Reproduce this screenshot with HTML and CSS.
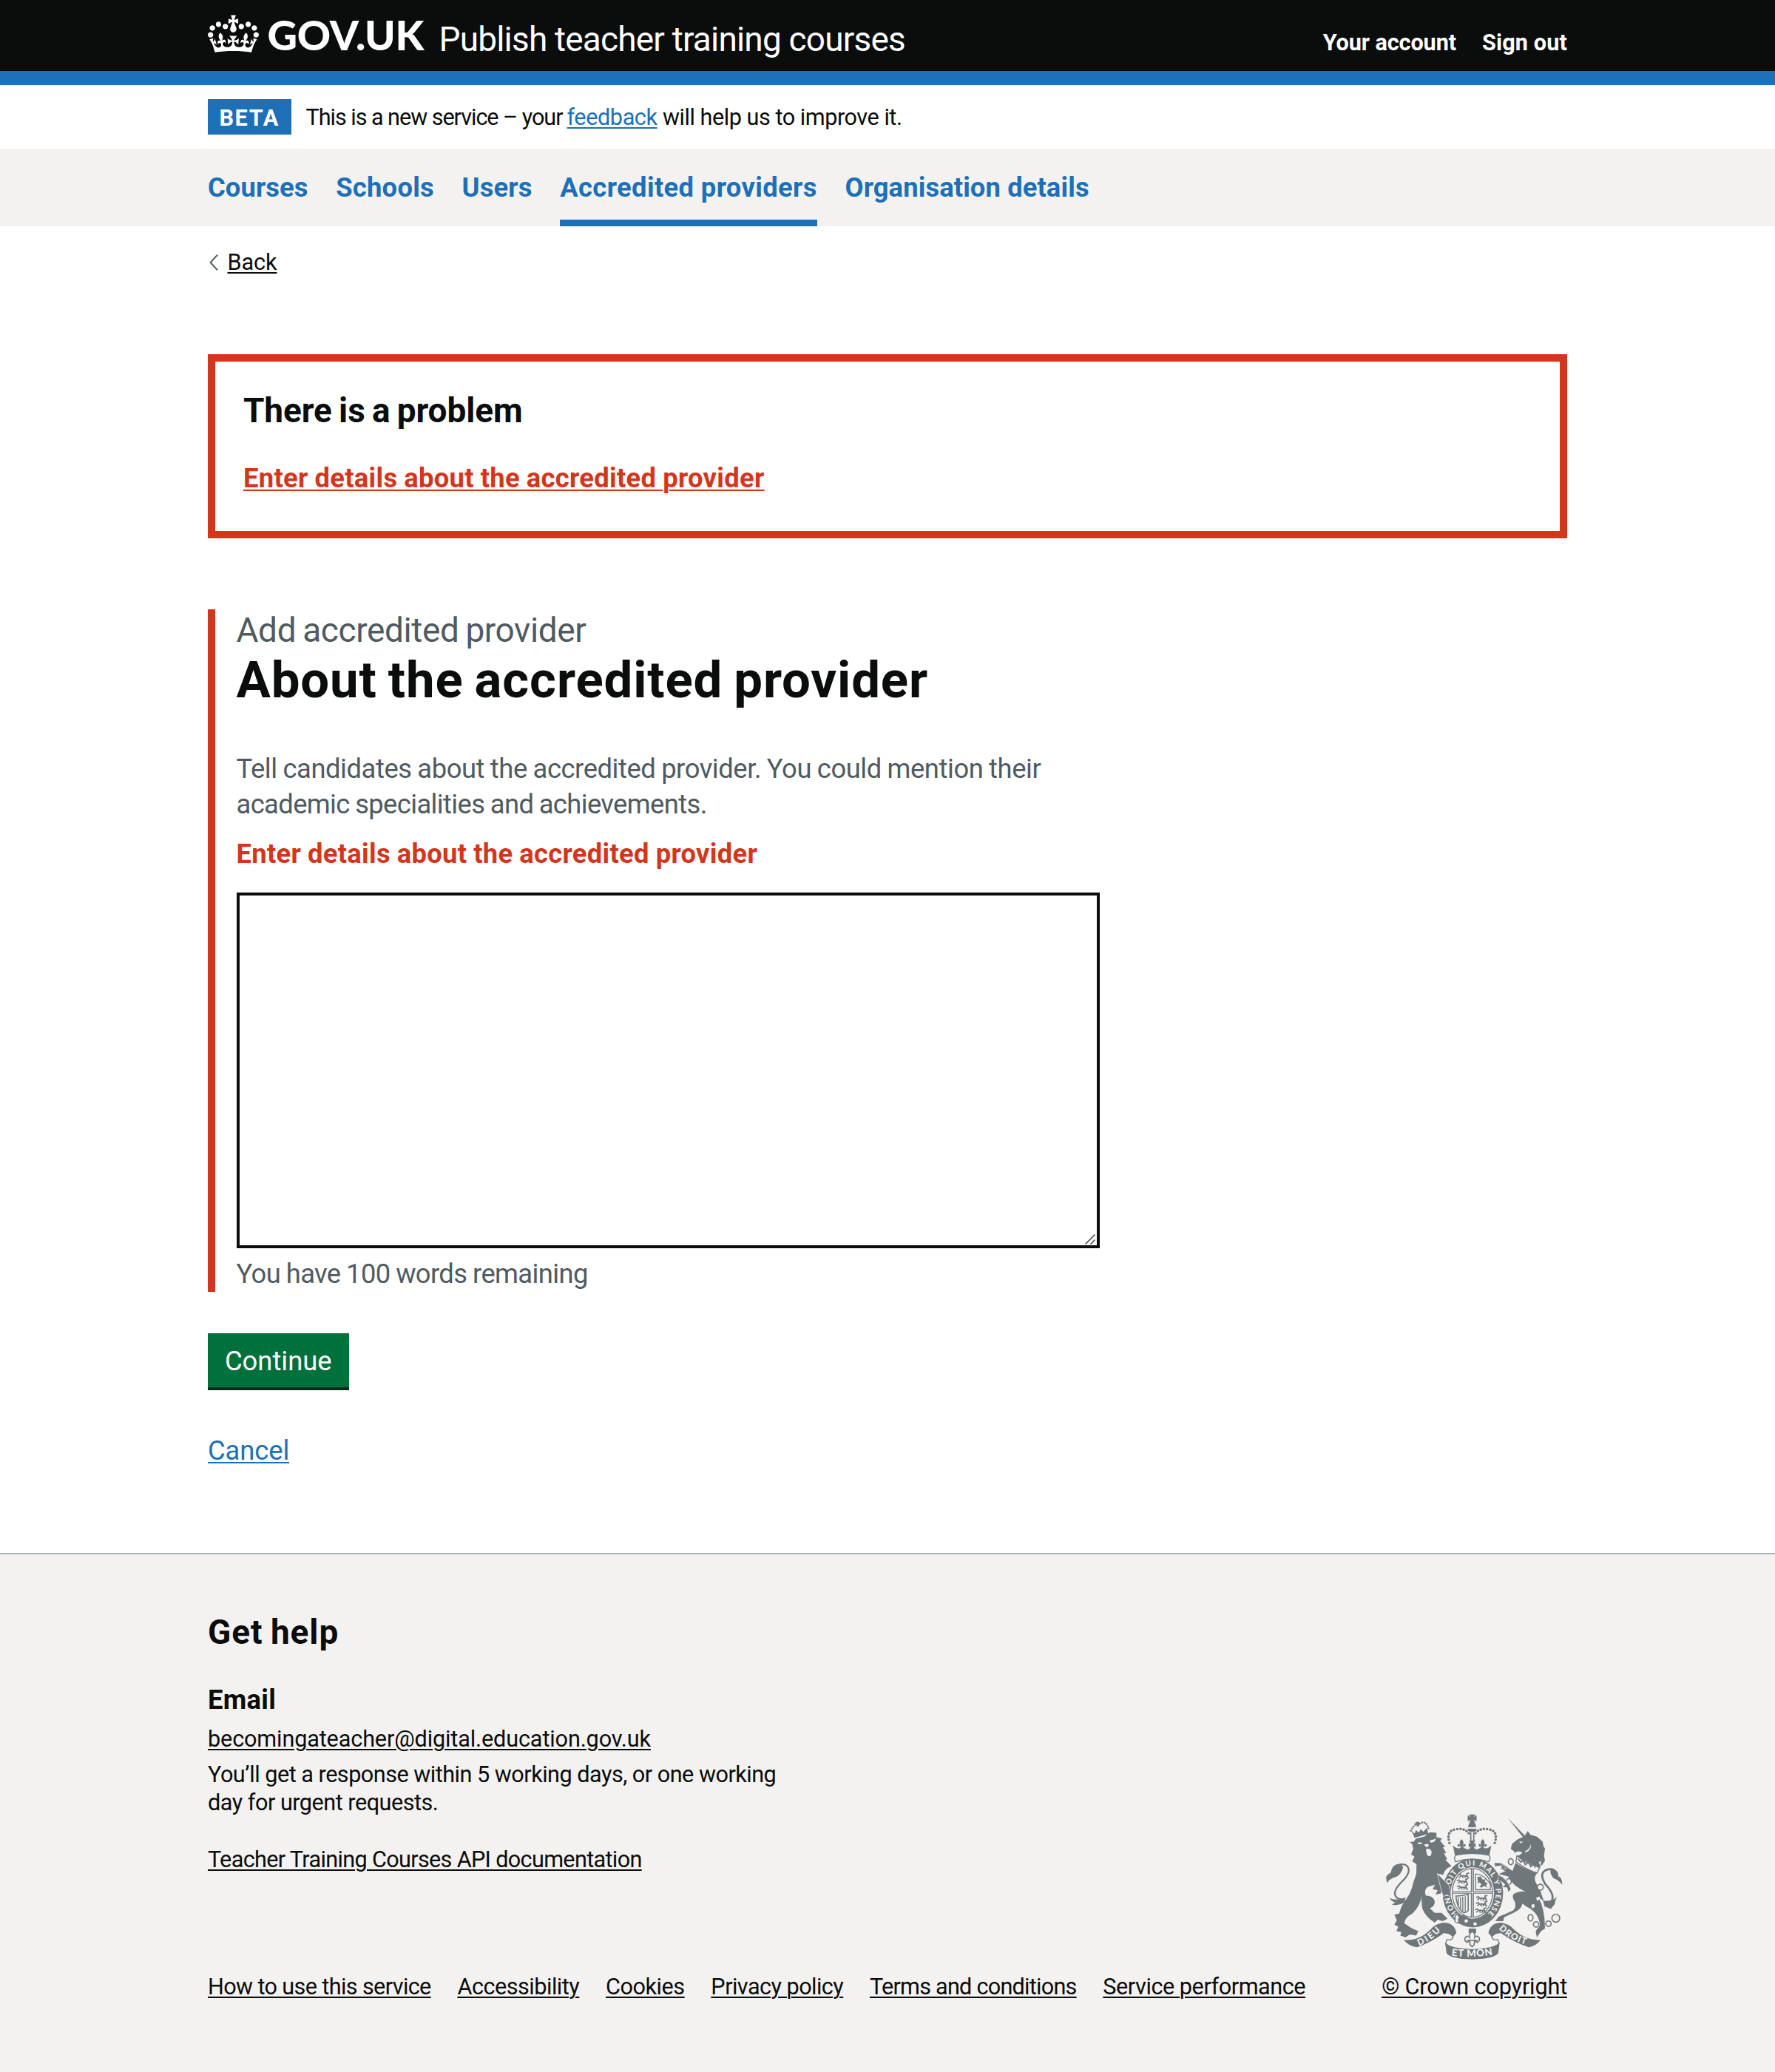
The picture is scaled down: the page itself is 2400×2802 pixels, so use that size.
FILE: index.html
```
<!DOCTYPE html>
<html lang="en">
<head>
<meta charset="utf-8">
<title>About the accredited provider - Publish teacher training courses - GOV.UK</title>
<link rel="stylesheet" href="styles.css">
</head>
<body>
<header class="header">
  <div class="container header-inner">
    <svg class="logo" width="294" height="51" viewBox="0 0 294 51" fill="#fff" role="img" aria-label="GOV.UK">
      <path transform="translate(0 .5) scale(.5227)" d="M25 30.2c3.5 1.5 7.7-.2 9.1-3.7 1.5-3.6-.2-7.8-3.9-9.2-3.6-1.4-7.6.3-9.1 3.9-1.4 3.5.3 7.5 3.9 9zM9 39.5c3.6 1.5 7.8-.2 9.2-3.7 1.5-3.6-.2-7.8-3.9-9.1-3.6-1.5-7.6.2-9.1 3.8-1.4 3.5.3 7.5 3.8 9zM4.4 57.2c3.5 1.5 7.7-.2 9.1-3.8 1.5-3.6-.2-7.7-3.9-9.1-3.5-1.5-7.6.3-9.1 3.8-1.4 3.5.3 7.6 3.9 9.1zm38.3-21.4c3.5 1.5 7.7-.2 9.1-3.8 1.5-3.6-.2-7.7-3.9-9.1-3.6-1.5-7.6.3-9.1 3.8-1.3 3.6.4 7.7 3.9 9.1zm64.4-5.6c-3.6 1.5-7.8-.2-9.1-3.7-1.5-3.6.2-7.8 3.8-9.2 3.6-1.4 7.7.3 9.2 3.9 1.3 3.5-.4 7.5-3.9 9zm15.9 9.3c-3.6 1.5-7.7-.2-9.1-3.7-1.5-3.6.2-7.8 3.7-9.1 3.6-1.5 7.7.2 9.2 3.8 1.5 3.5-.3 7.5-3.8 9zm4.7 17.7c-3.6 1.5-7.8-.2-9.2-3.8-1.5-3.6.2-7.7 3.9-9.1 3.6-1.5 7.7.3 9.2 3.8 1.3 3.5-.4 7.6-3.9 9.1zM89.3 35.8c-3.6 1.5-7.8-.2-9.2-3.8-1.4-3.6.2-7.7 3.9-9.1 3.6-1.5 7.7.3 9.2 3.8 1.4 3.6-.3 7.7-3.9 9.1zM69.7 17.7l8.9 4.7V9.3l-8.9 2.8c-.2-.3-.5-.6-.9-.9L72.4 0H59.6l3.5 11.2c-.3.3-.6.5-.9.9l-8.8-2.8v13.1l8.8-4.7c.3.3.6.7.9.9l-5 15.4v.1c-.2.8-.4 1.6-.4 2.4 0 4.1 3.1 7.5 7 8.1h.2c.3 0 .7.1 1 .1.4 0 .7 0 1-.1h.2c4-.6 7.1-4.1 7.1-8.1 0-.8-.1-1.7-.4-2.4V34l-5.1-15.4c.4-.2.7-.6 1-.9zM66 92.8c16.9 0 32.8 1.1 47.1 3.2 4-16.9 8.9-26.7 14-33.5l-9.6-3.4c1 4.9 1.1 7.2 0 10.2-1.5-1.4-3-4.3-4.2-8.7L108.6 76c2.8-2 5-3.2 7.5-3.3-4.4 9.4-10 11.9-13.6 11.2-4.3-.8-6.3-4.6-5.6-7.9 1-4.7 5.7-5.9 8-.5 4.3-8.7-3-11.4-7.6-8.8 7.1-7.2 7.9-13.5 2.1-21.1-8 6.1-8.1 12.3-4.5 20.8-4.7-5.4-12.1-2.5-9.5 6.2 3.4-5.2 7.9-2 7.2 3.1-.6 4.3-6.4 7.8-13.5 7.2-10.3-.9-10.9-8-11.2-13.8 2.5-.5 7.1 1.8 11 7.3L80.2 60c-4.1 4.4-8 5.3-12.3 5.4 1.4-4.4 8-11.6 8-11.6H55.5s6.4 7.2 7.9 11.6c-4.2-.1-8-1-12.3-5.4l1.4 16.4c3.9-5.5 8.5-7.7 10.9-7.3-.3 5.8-.9 12.8-11.1 13.8-7.2.6-12.9-2.9-13.5-7.2-.7-5 3.8-8.3 7.1-3.1 2.7-8.7-4.6-11.6-9.4-6.2 3.7-8.5 3.6-14.7-4.6-20.8-5.8 7.6-5 13.9 2.2 21.1-4.7-2.6-11.9.1-7.7 8.8 2.3-5.5 7.1-4.2 8.1.5.7 3.3-1.3 7.1-5.7 7.9-3.5.7-9-1.8-13.5-11.2 2.5.1 4.7 1.3 7.5 3.3l-4.7-15.4c-1.2 4.4-2.7 7.2-4.3 8.7-1.1-3-.9-5.3 0-10.2l-9.5 3.4c5 6.9 9.9 16.7 14 33.5 14.8-2.1 30.8-3.2 47.7-3.2z"/>
      <text class="logotype" x="80.5" y="48" textLength="212" lengthAdjust="spacing">GOV.UK</text>
    </svg>
    <span class="service">Publish teacher training courses</span>
    <nav class="account">
      <a class="account-first">Your account</a>
      <a>Sign out</a>
    </nav>
  </div>
</header>
<div class="container phase">
  <strong class="tag">BETA</strong>
  <span class="phase-text"><span class="phase-before">This is a new service – your</span><a class="link phase-link">feedback</a><span class="phase-after">will help us to improve it.</span></span>
</div>
<nav class="primary">
  <div class="container primary-list">
    <a class="item-courses">Courses</a>
    <a class="item-schools">Schools</a>
    <a class="item-users">Users</a>
    <a class="item-accredited current">Accredited providers</a>
    <a class="item-organisation">Organisation details</a>
  </div>
</nav>
<div class="container">
  <div class="back">
    <svg width="14" height="22" viewBox="0 0 14 22" fill="none" stroke="#505a5f" stroke-width="2"><path d="M13 .7 3.6 11 13 21.3"/></svg>
    <a>Back</a>
  </div>
  <main>
    <section class="summary">
      <h2>There is a problem</h2>
      <a>Enter details about the accredited provider</a>
    </section>
    <div class="group">
      <span class="caption">Add accredited provider</span>
      <h1>About the accredited provider</h1>
      <p class="hint"><span class="hint-a">Tell candidates about the accredited provider. You could mention their</span><br><span class="hint-b">academic specialities and achievements.</span></p>
      <p class="error">Enter details about the accredited provider</p>
      <div class="textarea" role="textbox">
        <svg class="grip" width="14" height="14" viewBox="0 0 14 14" stroke="#444" stroke-width="1.5"><path d="M.5 13.5l13-13M7.5 13.5l6-6"/></svg>
      </div>
      <p class="remaining">You have 100 words remaining</p>
    </div>
    <button class="button">Continue</button>
    <a class="link cancel">Cancel</a>
  </main>
</div>
<footer class="footer">
  <div class="container footer-inner">
    <div class="footer-main">
      <h2>Get help</h2>
      <h3>Email</h3>
      <a class="f-link f-email">becomingateacher@digital.education.gov.uk</a>
      <p class="f-text"><span class="f-text-a">You’ll get a response within 5 working days, or one working</span><br><span class="f-text-b">day for urgent requests.</span></p>
      <a class="f-link f-api">Teacher Training Courses API documentation</a>
      <div class="f-list">
        <a class="f-link f-how">How to use this service</a>
        <a class="f-link f-acc">Accessibility</a>
        <a class="f-link f-cook">Cookies</a>
        <a class="f-link f-priv">Privacy policy</a>
        <a class="f-link f-terms">Terms and conditions</a>
        <a class="f-link f-perf">Service performance</a>
      </div>
    </div>
    <div class="copyright">
      <svg class="crest" width="239" height="197" viewBox="42 64 718 592" fill="#6f777b" aria-hidden="true">
        <defs>
          <path id="garter" d="M336 472A94 111 0 1 1 452 472"/>
          <path id="dieu" d="M176 600Q238 574 278 522"/>
          <path id="droit" d="M500 530Q548 580 622 598"/>
          <path id="etmon" d="M308 640Q392 650 478 636"/>
          <g id="passant" fill="none" stroke="#6f777b" stroke-width="5"><path d="M0 4l9-4 5 6h18l8 5-4-13 10-3M14 6l-9 8M19 7l2 9M31 7l-3 9M37 10l8 6"/></g>
          <g id="lily"><path d="M0-18Q12-6 6 6L14 2Q20 8 12 14L4 11V20H-4V11L-12 14Q-20 8-14 2L-6 6Q-12-6 0-18Z"/></g>
        </defs>
        <!-- lion -->
        <g fill="none" stroke="#6f777b" stroke-width="7"><path d="M118 410Q84 416 78 390Q76 370 104 342Q138 310 134 288Q128 264 96 270"/></g>
        <path d="M100 267Q66 268 62 302Q46 310 42 322L46 345Q58 326 78 322Q104 312 112 280ZM56 406Q84 420 122 402L116 424Q92 440 66 432L80 424Q64 420 56 406Z"/>
        <path d="M137 178l18-1 8-12 36-9 20-18 28 3v18l23 5-8 9 20 25-9 1 14 24-10 1 14 24-8 2 25 26Q278 288 275 312L250 306L292 352Q306 368 303 402L288 396L277 402L268 386L243 392L252 374L231 370L242 352L213 360Q194 374 204 396Q240 398 240 424Q238 442 220 447L240 466L268 466L292 490L272 500L252 494L240 506Q204 484 190 450Q184 420 188 396Q180 440 150 468Q118 486 116 508L146 528L173 540L165 558L138 554L122 566L100 558L104 544L84 540L92 522L76 514L86 496L76 474L96 468Q104 434 124 410Q146 380 152 346L165 308L166 268L148 256L158 238L144 228L153 206L148 186Z"/>
        <path d="M168 181q12-4 22 2-10 10-22-2zM218 172q14-2 27-8-2 15-20 17zM196 188l18-2 2 8-10 6zM204 208q10-6 20 2 8 14-3 26-12 0-14-12z" fill="#f3f2f1"/>
        <path d="M143 132q20-36 35-28 28-18 38 24" fill="none" stroke="#6f777b" stroke-width="8" stroke-linecap="round" stroke-dasharray="0 10"/>
        <path d="M146 132l12 12 6-14 12 10 6-14 12 10 14-16 6 25-56 16zM163 96h14v18h-10zM160 101h22v6h-22z"/>
        <!-- unicorn -->
        <path d="M536 80l70 72 12-18 12 16 24 6 24 20 4 20 6 8-4 30 4 20-14 22-4-22-10 10Q674 262 668 284L570 236Q590 232 596 220L580 216L564 222L560 214L549 206L554 186L576 168L598 158Z"/>
        <path d="M584 176q8 2 14 0-2 8-12 6zM606 216q22-8 24-30 6 24-20 34z" fill="#f3f2f1"/>
        <path d="M574 234Q600 260 666 282L656 304Q610 290 570 258Z" fill="#f3f2f1" stroke="#6f777b" stroke-width="4"/>
        <path d="M578 246l12 14 10-8 8 18 14-10 8 18 14-12 4 16" fill="none" stroke="#6f777b" stroke-width="6"/>
        <path d="M568 262Q600 286 656 304Q634 330 664 362L684 420L660 400Q688 450 688 530L672 540L655 566L650 540L668 516Q664 474 630 450Q610 440 596 428Q594 450 560 466L522 484L518 500H486L500 482L556 458Q572 446 566 422Q552 404 560 390Q584 376 610 380Q566 362 548 334L538 318L500 308L528 296L508 288L512 272L486 278L482 262L508 262Q540 284 556 296Z"/>
        <g fill="none" stroke="#6f777b" stroke-width="8"><path d="M690 440Q724 424 718 394Q712 374 690 350Q664 310 688 294Q708 284 724 292"/></g>
        <path d="M720 286Q744 294 742 318Q758 322 758 352Q744 332 724 326Q708 312 710 290ZM680 416Q712 422 736 402Q728 420 728 430L712 450L686 440Z"/>
        <g fill="#f3f2f1" stroke="#6f777b" stroke-width="5"><ellipse cx="549" cy="258" rx="10" ry="12"/><ellipse cx="541" cy="339" rx="10" ry="12"/><circle cx="669" cy="362" r="12"/><ellipse cx="629" cy="486" rx="10" ry="13"/><circle cx="652" cy="513" r="11"/><circle cx="702" cy="510" r="11"/><circle cx="732" cy="488" r="16"/></g>
        <path d="M652 404l14-4 2 10-12 8zM632 434l12-4 2 12-10 6z" fill="#f3f2f1"/>
        <!-- garter and shield -->
        <ellipse cx="394" cy="385" rx="128" ry="145" fill="#f3f2f1"/>
        <ellipse cx="395" cy="385" rx="123" ry="140"/>
        <ellipse cx="393" cy="385" rx="88" ry="105" fill="#f3f2f1"/>
        <ellipse cx="393" cy="385" rx="82" ry="99" fill="none" stroke="#6f777b" stroke-width="4"/>
        <text class="garter-text"><textPath href="#garter" textLength="512">HONI SOIT QUI MAL Y PENSE</textPath></text>
        <path d="M310 378H476V388H310ZM387 285H399V484H387Z"/>
        <path d="M310 383H476M393 285V484" stroke="#f3f2f1" stroke-width="3"/>
        <use href="#passant" x="334" y="309"/><use href="#passant" x="330" y="332"/><use href="#passant" x="330" y="356"/>
        <use href="#passant" x="408" y="400"/><use href="#passant" x="408" y="424"/><use href="#passant" x="404" y="450"/>
        <path d="M406 308Q440 310 466 350V372H406Z" fill="none" stroke="#6f777b" stroke-width="4"/>
        <path d="M412 322l14-4 10 14 10-4-2 12 12 8-8 4 6 12-14-8-10 8-8-4 8-10-8-8-8 6 2-12z"/>
        <path d="M326 398Q350 398 376 390V456Q362 472 350 460Q330 440 326 398Z" fill="none" stroke="#6f777b" stroke-width="5"/>
        <path d="M336 402V436M345 402V450M354 400V460M364 398V462" stroke="#6f777b" stroke-width="4"/>
        <path d="M334 484l22-10 30 18 44 2 12 14-20 10-50 2-30-14z"/>
        <path d="M330 472q-12 6-6 18-8 12 8 18 8-4 4-14 10-10-6-22z" fill="#f3f2f1" stroke="#6f777b" stroke-width="4"/>
        <g fill="#f3f2f1"><circle cx="368" cy="499" r="7"/><circle cx="404" cy="511" r="7"/></g>
        <!-- paws over the garter -->
        <path d="M250 306L296 352Q308 372 303 402L290 392L276 400L268 380ZM482 262l28 2 22 24-22-2 2-12-28 4zM500 312q34 14 50 58l-12 12-4-18-20-2 12-10q-12-16-30-18z" stroke="#f3f2f1" stroke-width="2"/>
        <!-- centre crown -->
        <path d="M326 232Q392 216 460 232Q470 240 460 258Q392 236 324 258Q316 240 326 232Z" fill="#f3f2f1" stroke="#6f777b" stroke-width="4"/>
        <path d="M300 182Q284 130 330 126Q366 120 386 152M484 182Q500 130 454 126Q418 120 398 152" fill="none" stroke="#6f777b" stroke-width="11" stroke-linecap="round" stroke-dasharray="0 13"/>
        <path d="M314 192Q330 208 344 202L352 196L366 206Q380 212 388 196H396Q404 212 418 206L432 196L440 202Q454 208 470 192L462 232Q392 218 322 232Z"/>
        <use href="#lily" x="349" y="184"/><use href="#lily" x="435" y="184"/>
        <path d="M380 172h24l-6 14 8-4v18l-8-4 4 8h-20l4-8-8 4v-18l8 4zM384 140h5v32h-5zM396 140h5v32h-5zM374 124h36q2 12-18 14-20-2-18-14zM376 118q0-20 16-22 16 2 16 22zM378 66h28l-8 10 12-6v24l-12-6 6 12h-24l6-12-12 6v-24l12 6z"/>
        <!-- ribbons -->
        <path d="M114 576Q182 582 232 524Q254 508 280 506Q322 510 328 548L314 564Q296 548 278 548Q226 586 168 606Q136 602 114 576ZM670 576Q606 580 552 524Q530 508 506 506Q464 510 458 548L472 564Q490 548 508 548Q560 586 622 606Q652 600 670 576Z"/>
        <path d="M282 548q30-4 32 18-6 14-24 8l-6 16q20 22 40 22M504 548q-30-4-32 18 6 14 24 8l6 16q-20 22-40 22" fill="none" stroke="#6f777b" stroke-width="4"/>
        <path d="M282 588Q310 612 392 614Q474 612 504 588L498 630Q480 654 392 655Q304 654 288 630Z"/>
        <text class="motto"><textPath href="#dieu" textLength="108">DIEU</textPath></text>
        <text class="motto"><textPath href="#droit" textLength="128">DROIT</textPath></text>
        <text class="motto motto-mid"><textPath href="#etmon" textLength="168">ET MON</textPath></text>
        <path d="M378 530h30v18h-30z"/>
        <path d="M392 540q18 16 8 30 6-14 18-6 10 12-4 22l-12-6-2 16-8 8-8-8-2-16-12 6q-14-10-4-22 12-8 18 6-10-14 8-30z" fill="#f3f2f1" stroke="#6f777b" stroke-width="5"/>
        <path d="M370 578h44" stroke="#6f777b" stroke-width="5"/>
      </svg>
      <a class="f-link f-copy">© Crown copyright</a>
    </div>
  </div>
</footer>
</body>
</html>
```
FILE: styles.css
```
* { box-sizing: border-box; }
body { margin: 0; background: #fff; color: #0b0c0c; font-family: Roboto, "Liberation Sans", sans-serif; font-size: 36.38px; line-height: 48px; white-space: nowrap; }
h1, h2, h3, p { margin: 0; }
a { color: inherit; text-decoration: none; }
.container { width: 1838px; margin: 0 auto; }
.link { color: #1d70b8; text-decoration: underline; text-decoration-thickness: 2px; text-underline-offset: 3px; }

.header { height: 115px; background: #0b0c0c; color: #fff; border-bottom: 19px solid #1d70b8; }
.header-inner { display: flex; align-items: flex-start; padding-top: 20px; }
.logo { display: block; overflow: visible; flex: none; }
.logotype { font: 900 56px Lato, sans-serif; }
.service { margin: 9px 0 0 18.5px; font-size: 45.96px; letter-spacing: -.8px; }
.account { display: flex; gap: 35px; margin: 18.5px 0 0 auto; font-size: 30.64px; line-height: 38px; font-weight: 700; letter-spacing: .12px; }
.account-first { letter-spacing: -.1px; }

.phase { display: flex; height: 86px; padding-top: 19px; font-size: 30.64px; }
.tag { width: 113px; height: 48px; padding: 2px 0 0 15.5px; background: #1d70b8; color: #fff; letter-spacing: 1.58px; }
.phase-text { display: flex; margin-left: 19.5px; line-height: 49px; }
.phase-before { width: 353px; letter-spacing: -1.05px; }
.phase-link { width: 123.5px; letter-spacing: -.42px; }
.phase-after { margin-left: 6px; letter-spacing: -.47px; }

.primary { background: #f3f2f1; font-weight: 700; color: #1d70b8; }
.primary-list { display: flex; gap: 37.6px; }
.primary-list a { height: 105px; line-height: 106px; }
.item-courses { letter-spacing: .07px; }
.item-schools { letter-spacing: .25px; }
.item-users { letter-spacing: .15px; }
.item-accredited { letter-spacing: .37px; }
.item-organisation { letter-spacing: .1px; }
.primary-list .current { border-bottom: 9px solid #1d70b8; }

.back { display: flex; align-items: center; gap: 12.5px; height: 38px; margin-top: 29.5px; font-size: 30.64px; line-height: 38px; letter-spacing: -.1px; }
.back a { text-decoration: underline; text-decoration-thickness: 2px; text-underline-offset: 3px; }

.summary { margin-top: 105.5px; border: 10px solid #d4351c; padding: 42px 38px 47px; height: 249px; }
.summary h2 { font-size: 45.96px; letter-spacing: -.1px; word-spacing: -2px; margin-bottom: 43.5px; }
.summary a { display: block; color: #d4351c; font-weight: 700; letter-spacing: .3px; word-spacing: -.5px; text-decoration: underline; text-decoration-thickness: 2px; text-underline-offset: 3px; }

.group { width: 1206px; margin-top: 96px; padding: 4px 0 0 28.5px; border-left: 10px solid #d4351c; }
.caption { display: block; color: #505a5f; font-size: 45.96px; letter-spacing: -.38px; word-spacing: -2px; }
h1 { margin-top: 5.5px; font-size: 68.94px; line-height: 76px; letter-spacing: .87px; word-spacing: -3px; }
.hint { margin-top: 58.5px; line-height: 47.9px; color: #505a5f; }
.hint-a { letter-spacing: -.44px; word-spacing: -.8px; }
.hint-b { letter-spacing: -.62px; word-spacing: -1px; }
.error { margin-top: 19px; color: #d4351c; font-weight: 700; letter-spacing: .3px; word-spacing: -.5px; }
.textarea { display: flex; align-items: flex-end; justify-content: flex-end; margin: 28px 0 11px; height: 481px; padding: 0 2px 1px 0; border: 4px solid #0b0c0c; }
.grip { display: block; }
.remaining { margin-bottom: -1px; color: #505a5f; letter-spacing: -.62px; word-spacing: -.8px; }

.button { display: block; margin: 57px 0 0; width: 190.5px; height: 73px; padding: 1px 0 0; border: 0; background: #00703c; box-shadow: 0 4px 0 #002d18; color: #fff; font: inherit; line-height: 74px; letter-spacing: 0; }
.cancel { display: block; width: max-content; margin-top: 62.5px; letter-spacing: -.1px; }

.footer { margin-top: 113.5px; min-height: 702px; border-top: 2px solid #b1b4b6; background: #f3f2f1; padding-top: 81px; }
.footer-inner { display: flex; justify-content: space-between; align-items: flex-end; }
.footer-main { display: flex; flex-direction: column; align-items: flex-start; font-size: 30.64px; line-height: 38px; }
.footer-main h2 { font-size: 45.96px; line-height: 48px; letter-spacing: .95px; word-spacing: -2px; }
.footer-main h3 { margin: 44.5px 0 9.5px; font-size: 36.38px; line-height: 48px; letter-spacing: .3px; }
.f-link { text-decoration: underline; text-decoration-thickness: 2px; text-underline-offset: 3px; }
.f-email { letter-spacing: -.14px; }
.f-text { margin: 10px 0 38.5px; line-height: 38.3px; }
.f-text-a { letter-spacing: -.51px; }
.f-text-b { letter-spacing: -.5px; }
.f-api { letter-spacing: -.67px; }
.f-list { display: flex; gap: 35.7px; margin-top: 134.3px; }
.f-how { letter-spacing: -.63px; }
.f-acc { letter-spacing: -.5px; }
.f-cook { letter-spacing: -.46px; }
.f-priv { letter-spacing: -.55px; }
.f-terms { letter-spacing: -.76px; }
.f-perf { letter-spacing: -.46px; }
.copyright { display: flex; flex-direction: column; align-items: flex-end; gap: 18.5px; font-size: 30.64px; line-height: 38px; }
.f-copy { letter-spacing: -.16px; }
.crest { display: block; margin-right: 6px; }
.garter-text { font: 900 30px Lato, sans-serif; fill: #f3f2f1; }
.motto { font: 900 36px Lato, sans-serif; fill: #f3f2f1; }
.motto-mid { font-size: 40px; }
```
